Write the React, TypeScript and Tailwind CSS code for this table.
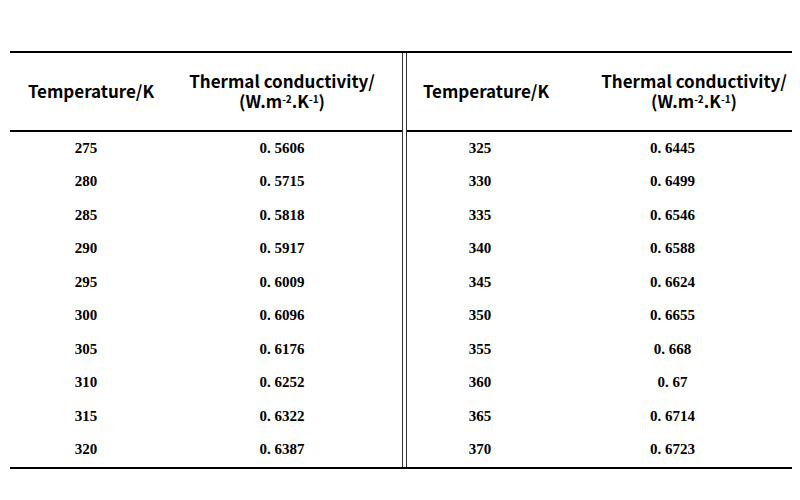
import React from 'react';

const left = [
  ['275', '0. 5606'],
  ['280', '0. 5715'],
  ['285', '0. 5818'],
  ['290', '0. 5917'],
  ['295', '0. 6009'],
  ['300', '0. 6096'],
  ['305', '0. 6176'],
  ['310', '0. 6252'],
  ['315', '0. 6322'],
  ['320', '0. 6387'],
];

const right = [
  ['325', '0. 6445'],
  ['330', '0. 6499'],
  ['335', '0. 6546'],
  ['340', '0. 6588'],
  ['345', '0. 6624'],
  ['350', '0. 6655'],
  ['355', '0. 668'],
  ['360', '0. 67'],
  ['365', '0. 6714'],
  ['370', '0. 6723'],
];

const headFont = { fontFamily: '"Noto Sans CJK KR", "Noto Sans", sans-serif' };
const dataFont = { fontFamily: '"Liberation Serif", serif' };

function Header({ tempPad, condPad }: { tempPad: string; condPad: string }) {
  return (
    <div className="flex h-[79px] items-center border-b-2 border-black pb-[2px] text-[17px] font-bold text-black" style={headFont}>
      <div className={`w-[var(--c1)] shrink-0 whitespace-nowrap text-center ${tempPad}`}>Temperature/K</div>
      <div className={`flex-1 whitespace-nowrap text-center ${condPad}`}>
        <div className="leading-[20px]">Thermal conductivity/</div>
        <div className="leading-[20px]">
          (W.m<span className="relative -top-[5px] text-[10px] leading-none">-2</span>.K
          <span className="relative -top-[5px] text-[10px] leading-none">-1</span>)
        </div>
      </div>
    </div>
  );
}

function Half({ rows, first, tempPad, condPad }: { rows: string[][]; first: string; tempPad: string; condPad: string }) {
  return (
    <div className={`flex flex-col ${first}`}>
      <Header tempPad={tempPad} condPad={condPad} />
      {rows.map(([t, k]) => (
        <div key={t} className="flex h-[33.5px] items-center pb-[2px] text-[15px] font-bold text-black" style={dataFont}>
          <div className="w-[var(--c1)] shrink-0 text-center">{t}</div>
          <div className="flex-1 text-center">{k}</div>
        </div>
      ))}
    </div>
  );
}

export default function App() {
  return (
    <div className="h-[500px] w-[800px] bg-white pt-[51px]">
      <div className="ml-[10px] flex w-[782px] border-y-2 border-black">
        <Half rows={left} first="w-[392px] [--c1:152px]" tempPad="pl-[10px]" condPad="pl-0" />
        <div className="w-[5px] shrink-0 border-x border-[#333]" />
        <Half rows={right} first="w-[385px] [--c1:146px]" tempPad="pl-[12px]" condPad="pl-[43px]" />
      </div>
    </div>
  );
}
